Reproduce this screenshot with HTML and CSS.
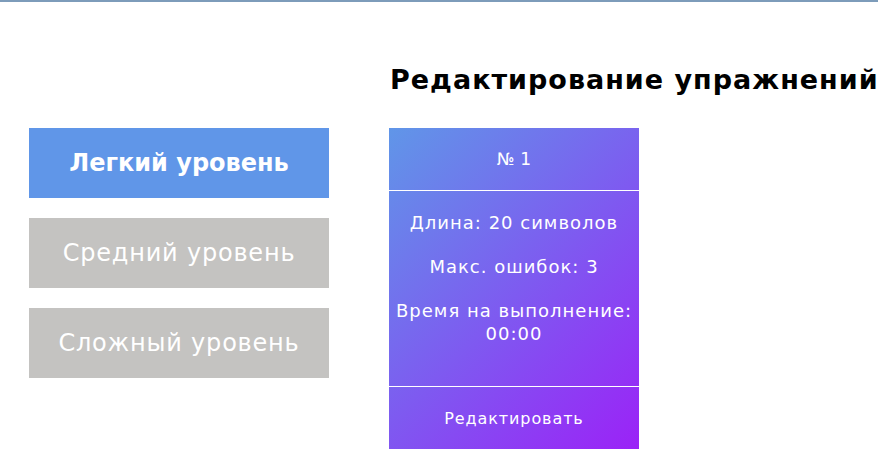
FILE: index.html
```html
<!DOCTYPE html>
<html lang="ru">
<head>
<meta charset="utf-8">
<link rel="stylesheet" href="styles.css">
</head>
<body>
<div class="topline"></div>
<main class="page">
  <nav class="levels">
    <button class="level active">Легкий уровень</button>
    <button class="level">Средний уровень</button>
    <button class="level">Сложный уровень</button>
  </nav>
  <section class="editor">
    <h1 class="title">Редактирование упражнений</h1>
    <div class="card">
      <div class="card-head">№ 1</div>
      <div class="card-body">
        <p>Длина: 20 символов</p>
        <p>Макс. ошибок: 3</p>
        <p>Время на выполнение:<br>00:00</p>
      </div>
      <div class="card-foot">Редактировать</div>
    </div>
  </section>
</main>
</body>
</html>
```
FILE: styles.css
```css
html, body { margin: 0; padding: 0; background: #fff; }
body { font-family: "DejaVu Sans", "Open Sans", sans-serif; overflow: hidden; }
.topline { height: 2px; background: #7d9cba; }
.page { display: flex; padding-left: 29px; gap: 60px; }
.levels { display: flex; flex-direction: column; gap: 20px; padding-top: 126px; width: 300px; flex-shrink: 0; }
.level {
  height: 70px; border: 0; margin: 0; padding: 0;
  background: #c4c3c1; color: #fff;
  font-family: inherit; font-size: 24px; font-weight: 400; letter-spacing: 0.8px;
}
.level.active { background: #6096e8; font-weight: 700; letter-spacing: 0; }
.editor { display: flex; flex-direction: column; min-width: 0; }
.title { margin: 60px 0 0 1px; font-size: 27px; font-weight: 700; color: #000; line-height: 36px; white-space: nowrap; letter-spacing: 1px; }
.card {
  margin-top: 30px; width: 250px; height: 321px; flex-shrink: 0;
  display: flex; flex-direction: column; color: #fff;
  background: linear-gradient(135deg, #6096e8 0%, #7a62ef 45%, #9b22f7 100%);
}
.card-head { height: 62px; display: flex; align-items: center; justify-content: center; font-size: 17px; border-bottom: 1px solid #fff; }
.card-body { flex: 1; text-align: center; font-size: 18px; line-height: 23px; padding-top: 20px; border-bottom: 1px solid #fff; letter-spacing: 1px; }
.card-body p { margin: 0 0 21px; }
.card-foot { height: 62px; display: flex; align-items: center; justify-content: center; font-size: 16px; letter-spacing: 0.9px; }
```
